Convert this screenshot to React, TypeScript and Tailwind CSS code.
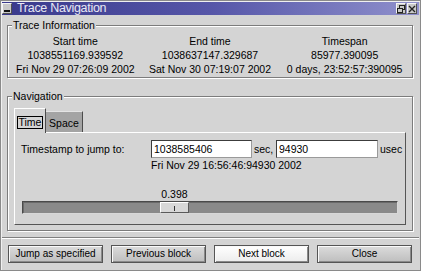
const info = [
  { title: "Start time", raw: "1038551169.939592", date: "Fri Nov 29 07:26:09 2002" },
  { title: "End time", raw: "1038637147.329687", date: "Sat Nov 30 07:19:07 2002" },
  { title: "Timespan", raw: "85977.390095", date: "0 days, 23:52:57:390095" },
];

const buttons = ["Jump as specified", "Previous block", "Next block", "Close"];

const SLIDER_VALUE = 0.398;
const TROUGH_INNER = 374;
const THUMB_W = 29;

const TitleButton = ({ kind }: { kind: "min" | "restore" | "close" }) => (
  <div className="flex h-[11px] w-[10px] items-center justify-center border border-t-[#f4f4f4] border-l-[#f4f4f4] border-r-[#505050] border-b-[#505050] bg-[#c8c8c8]">
    <svg width="8" height="8" viewBox="0 0 8 8">
      {kind === "min" && <rect x="1" y="5" width="6" height="2" fill="#111" />}
      {kind === "restore" && (
        <g fill="none" stroke="#222" strokeWidth="1">
          <rect x="2.5" y="0.5" width="5" height="4" />
          <rect x="0.5" y="3.5" width="5" height="4" fill="#c8c8c8" />
        </g>
      )}
      {kind === "close" && (
        <path d="M1 1 L7 7 M7 1 L1 7" stroke="#222" strokeWidth="1.4" />
      )}
    </svg>
  </div>
);

const Frame = ({
  label,
  className,
  children,
}: {
  label: string;
  className: string;
  children: React.ReactNode;
}) => (
  <div
    className={`relative ml-[6px] w-[406px] border border-[#7c7c7c] shadow-[inset_1px_1px_0_#fff,1px_1px_0_#fff] ${className}`}
  >
    <span className="absolute -top-[8px] left-[4px] bg-[#d4d4d4] px-px text-[10.5px] leading-[14px]">
      {label}
    </span>
    {children}
  </div>
);

export default function App() {
  const thumbLeft = Math.round(SLIDER_VALUE * (TROUGH_INNER - THUMB_W));

  return (
    <div className="flex h-[271px] w-[421px] flex-col overflow-hidden border border-[#8a8a8a] bg-[#d4d4d4] font-['Liberation_Sans',Arial,sans-serif] text-black shadow-[inset_1px_1px_0_#f0f0f0]">
      {/* title bar */}
      <div className="mx-px mt-px flex h-[13px] items-center bg-linear-to-r from-[#3a3a8c] via-[#5656a8] to-[#9090cc] pr-[2px]">
        <TitleButton kind="min" />
        <span className="ml-[5px] text-[12.5px] leading-[13px] tracking-[-0.3px] text-[#e8e8f4]">
          Trace Navigation
        </span>
        <div className="ml-auto flex gap-px">
          <TitleButton kind="restore" />
          <TitleButton kind="close" />
        </div>
      </div>

      {/* trace information */}
      <Frame label="Trace Information" className="mt-[10px] h-[53px]">
        <div className="grid grid-cols-3 pt-[8px] text-center text-[10.5px] leading-[14px]">
          {info.map((c) => (
            <div key={c.title} className="flex flex-col">
              <span>{c.title}</span>
              <span>{c.raw}</span>
              <span className="whitespace-nowrap">{c.date}</span>
            </div>
          ))}
        </div>
      </Frame>

      {/* navigation */}
      <Frame label="Navigation" className="mt-[18px] h-[135px]">
        <div className="flex h-full flex-col px-[6px] pt-[11px] pb-[5px]">
          <div className="flex items-end text-[10.5px]">
            <div className="relative z-10 -mb-px flex h-[25px] w-[32px] items-start justify-center border-t border-l border-r border-t-white border-l-white border-r-[#4c4c4c] bg-[#d4d4d4] pt-[7px]">
              <span className="border border-black px-px leading-[11px]">Time</span>
            </div>
            <div className="flex h-[21px] w-[37px] items-center justify-center border-t border-r border-t-[#e4e4e4] border-r-[#4c4c4c] bg-[#a4a4a4] pt-[2px] leading-[12px]">
              Space
            </div>
          </div>

          <div className="flex flex-1 flex-col border border-t-white border-l-white border-r-[#555] border-b-[#555] pt-[7px] pl-[6px] text-[10.5px] leading-[14px]">
            <div className="flex h-[18px] items-center">
              <span className="w-[130px]">Timestamp to jump to:</span>
              <div className="flex h-[18px] w-[101px] items-center border border-[#3c3c3c] border-r-[#9a9a9a] border-b-[#9a9a9a] bg-white pl-[2px]">
                1038585406
              </div>
              <span className="ml-[2px] w-[22px]">sec,</span>
              <div className="flex h-[18px] w-[102px] items-center border border-[#3c3c3c] border-r-[#9a9a9a] border-b-[#9a9a9a] bg-white pl-[2px]">
                94930
              </div>
              <span className="ml-[2px]">usec</span>
            </div>
            <div className="pl-[130px]">Fri Nov 29 16:56:46:94930 2002</div>

            <div className="mt-[15px] ml-px w-[376px]">
              <div className="relative h-[14px]">
                <span
                  className="absolute top-0 w-[29px] text-center"
                  style={{ left: thumbLeft + 1 }}
                >
                  0.398
                </span>
              </div>
              <div className="relative h-[13px] border border-[#4a4a4a] border-b-[#d8d8d8] border-r-[#d8d8d8] bg-[#8a8a8a] shadow-[inset_1px_1px_0_#6a6a6a]">
                <div
                  className="absolute top-0 flex h-[11px] w-[29px] items-center justify-center border border-t-white border-l-white border-r-[#5a5a5a] border-b-[#5a5a5a] bg-[#d8d8d8]"
                  style={{ left: thumbLeft }}
                >
                  <div className="mt-[2px] h-[5px] w-px bg-[#333]" />
                </div>
              </div>
            </div>
          </div>
        </div>
      </Frame>

      {/* separator */}
      <div className="mx-px mt-[6px] h-[2px] border-t border-b border-t-[#808080] border-b-white" />

      {/* buttons */}
      <div className="mt-[6px] flex gap-[8px] px-[7px]">
        {buttons.map((b) => (
          <button
            key={b}
            className={`flex h-[18px] w-[95px] items-center justify-center border border-[#555] text-[10px] leading-none shadow-[inset_1px_1px_0_#fafafa,inset_-1px_-1px_0_#8a8a8a] ${
              b === "Next block"
                ? "bg-linear-to-b from-[#ffffff] to-[#ececec]"
                : "bg-linear-to-b from-[#dcdcdc] to-[#bebebe]"
            }`}
          >
            {b}
          </button>
        ))}
      </div>
    </div>
  );
}
